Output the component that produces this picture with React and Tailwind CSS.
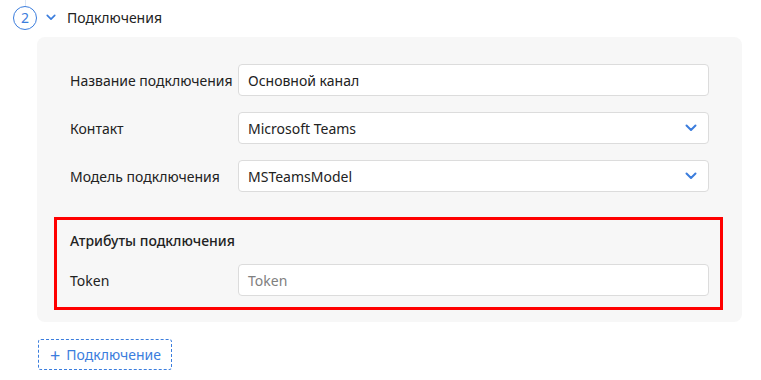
import React from "react";

function Chevron({ className }) {
  return (
    <svg viewBox="0 0 12 8" className={className} fill="none">
      <path d="M1.5 1.5L6 6l4.5-4.5" stroke="currentColor" strokeWidth="2" strokeLinecap="round" strokeLinejoin="round" />
    </svg>
  );
}

function Field({ label, value, placeholder, select }) {
  return (
    <div className="flex items-center">
      <div className="w-[168px] shrink-0 text-[14px] text-[#222]">{label}</div>
      <div className="flex-1 h-[32px] flex items-center justify-between bg-white border border-[#dcdcdc] rounded-[4px] pl-[9px] pr-[11px] text-[14px]">
        {value ? (
          <span className="text-[#222]">{value}</span>
        ) : (
          <span className="text-[#808080]">{placeholder}</span>
        )}
        {select && <Chevron className="w-[12px] h-[8px] text-[#3b7ddd]" />}
      </div>
    </div>
  );
}

export default function App() {
  return (
    <div className="w-[761px] h-[380px] bg-white overflow-hidden" style={{ fontFamily: '"Noto Sans", "Open Sans", sans-serif' }}>
      <div className="relative flex items-center h-[35px] pl-[13px]">
        <div className="absolute left-[25px] top-0 w-px h-[6px] bg-[#dbe6f5]" />
        <div className="w-[24px] h-[24px] rounded-full border border-[#3b7ddd] text-[#3b7ddd] flex items-center justify-center text-[14px]">
          2
        </div>
        <Chevron className="ml-[9px] w-[10px] h-[7px] text-[#3b7ddd]" />
        <span className="ml-[11px] text-[14px] text-[#222]">Подключения</span>
      </div>

      <div className="ml-[37px] mr-[19px] mt-[2px] bg-[#f7f7f7] rounded-[8px] pt-[27px] pb-[12px]">
        <div className="flex flex-col gap-[16px] px-[33px]">
          <Field label="Название подключения" value="Основной канал" />
          <Field label="Контакт" value="Microsoft Teams" select />
          <Field label="Модель подключения" value="MSTeamsModel" select />
        </div>

        <div className="mt-[25px] ml-[17px] mr-[19px] border-[3px] border-[#ff0000] pl-[13px] pr-[11px] pt-[10px] pb-[11px]">
          <div className="h-[20px] flex items-center text-[14px] font-medium text-[#222]">Атрибуты подключения</div>
          <div className="mt-[14px]">
            <Field label="Token" placeholder="Token" />
          </div>
        </div>
      </div>

      <div className="ml-[38px] mt-[17px]">
        <button className="h-[31px] w-[134px] flex items-center border border-dashed border-[#3b7ddd] rounded-[3px] pl-[11px] text-[14px] text-[#3b7ddd]">
          <span className="text-[18px] leading-none mr-[6px]">+</span>
          Подключение
        </button>
      </div>
    </div>
  );
}
